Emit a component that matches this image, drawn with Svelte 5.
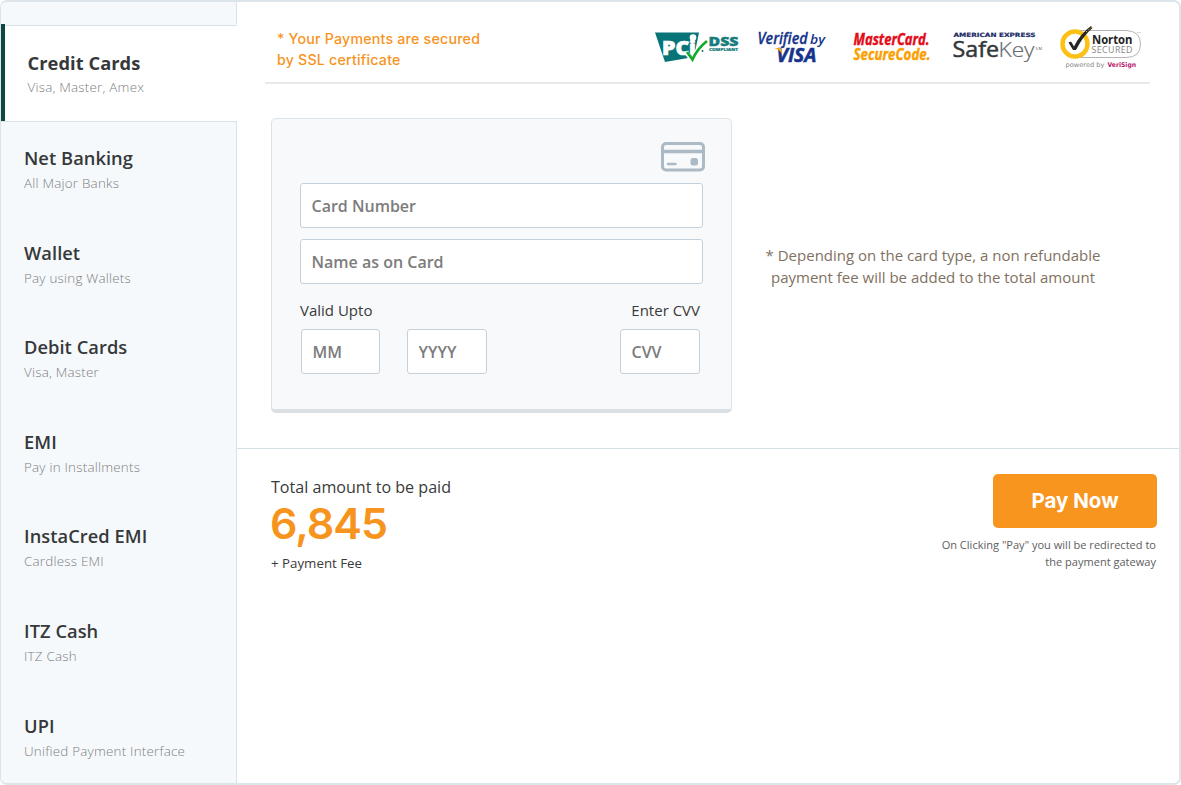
<script>
  const methods = [
    { name: 'Credit Cards', detail: 'Visa, Master, Amex' },
    { name: 'Net Banking', detail: 'All Major Banks' },
    { name: 'Wallet', detail: 'Pay using Wallets' },
    { name: 'Debit Cards', detail: 'Visa, Master' },
    { name: 'EMI', detail: 'Pay in Installments' },
    { name: 'InstaCred EMI', detail: 'Cardless EMI' },
    { name: 'ITZ Cash', detail: 'ITZ Cash' },
    { name: 'UPI', detail: 'Unified Payment Interface' }
  ];
  let active = $state(0);
</script>

<div class="frame">
  <nav class="sidebar">
    <div class="spacer"></div>
    {#each methods as m, i}
      <button class="method" class:active={active === i} onclick={() => (active = i)}>
        <span class="name">{m.name}</span>
        <span class="detail">{m.detail}</span>
      </button>
    {/each}
  </nav>

  <main>
    <header>
      <p class="secured">* Your Payments are secured<br />by SSL certificate</p>
      <div class="logos">
        <svg width="86" height="36" viewBox="654 28 86 36">
          <path d="M655 32.500H699L694 57L665 62Z" fill="#087477" />
          <g font-family="Open Sans, sans-serif" font-weight="800">
            <text x="662" y="55" font-size="19" textLength="34" lengthAdjust="spacingAndGlyphs" fill="#fff" stroke="#fff" stroke-width=".7">PCi</text>
            <circle cx="693" cy="37.500" r="3.300" fill="#fff" />
            <text x="708.500" y="46" font-size="12.500" textLength="30" lengthAdjust="spacingAndGlyphs" fill="#187c7c" stroke="#187c7c" stroke-width=".4">DSS</text>
            <text x="709" y="51" font-size="4" textLength="29" lengthAdjust="spacingAndGlyphs" fill="#187c7c" stroke="#187c7c" stroke-width=".2">COMPLIANT</text>
          </g>
          <path d="M686 52L692 60Q697 49 707 41" fill="none" stroke="#fff" stroke-width="4.500" />
          <path d="M687 52L692.500 59.500Q697 49 707 41" fill="none" stroke="#12ab2e" stroke-width="2.700" />
          <circle cx="702.500" cy="51" r="1" fill="#087477" />
        </svg>
        <svg width="70" height="36" viewBox="757 28 70 36" class="verified">
          <g font-family="Open Sans, sans-serif" font-style="italic" fill="#16338c">
            <text x="757.500" y="44" font-size="15.500" font-weight="600" textLength="50" lengthAdjust="spacingAndGlyphs" stroke="#16338c" stroke-width=".3">Verified</text>
            <text x="810" y="44" font-size="13" font-weight="600" textLength="15" lengthAdjust="spacingAndGlyphs">by</text>
            <text x="776.500" y="61.500" font-size="19" font-weight="700" textLength="40" lengthAdjust="spacingAndGlyphs" stroke="#16338c" stroke-width=".5">VISA</text>
          </g>
          <path d="M774 48H780.500Q782 49 782 54Q779 49 774 48Z" fill="#f8a51b" />
        </svg>
        <svg width="80" height="36" viewBox="852 28 80 36" class="mastercard">
          <g font-family="Open Sans, sans-serif" font-style="italic" font-weight="700" font-size="15.500" stroke-width=".4">
            <text x="853.500" y="45" textLength="76" lengthAdjust="spacingAndGlyphs" fill="#e30b19" stroke="#e30b19">MasterCard.</text>
            <text x="853.500" y="60" textLength="77" lengthAdjust="spacingAndGlyphs" fill="#faa000" stroke="#faa000">SecureCode.</text>
          </g>
        </svg>
        <svg width="92" height="36" viewBox="952 28 92 36" class="safekey">
          <text x="953.500" y="37.400" font-family="DejaVu Sans, sans-serif" font-size="5.800" font-weight="700" textLength="82" lengthAdjust="spacingAndGlyphs" fill="#1b2b66" stroke="#1b2b66" stroke-width=".2">AMERICAN EXPRESS</text>
          <text x="952.500" y="57" font-family="Open Sans, sans-serif" font-size="21" font-weight="500" textLength="46.500" lengthAdjust="spacingAndGlyphs" fill="#34373a" stroke="#34373a" stroke-width=".5">Safe</text>
          <text x="998.500" y="57" font-family="Open Sans, sans-serif" font-size="21" font-weight="300" textLength="36" lengthAdjust="spacingAndGlyphs" fill="#666a6e" stroke="#666a6e" stroke-width=".2">Key</text>
          <text x="1035.500" y="49.500" font-family="Open Sans, sans-serif" font-size="4" textLength="6.500" fill="#555">SM</text>
        </svg>
        <svg width="84" height="48" viewBox="1059 23 84 48" class="norton">
          <path d="M1076 30.500H1126Q1140.500 31 1140.500 44Q1140.500 57.500 1126 57.500H1076" fill="#fff" stroke="#b5b5b5" />
          <circle cx="1075" cy="44" r="12.500" fill="#fff" stroke="#fbc116" stroke-width="4.500" />
          <path d="M1068.500 42.500Q1071 41 1072 43L1074 46.500Q1080 34 1091 26L1092.500 28Q1083 36 1076 50H1073Z" fill="#252525" />
          <path d="M1086 32L1092.500 26.500" stroke="#e9ad20" stroke-width="1" stroke-dasharray="1.500 1.500" />
          <text x="1092" y="43.700" font-family="Open Sans, sans-serif" font-size="13" font-weight="700" textLength="40.500" lengthAdjust="spacingAndGlyphs" fill="#232323">Norton</text>
          <text x="1091.500" y="53.200" font-family="Open Sans, sans-serif" font-size="8.800" textLength="41" lengthAdjust="spacing" fill="#858585">SECURED</text>
          <text x="1137" y="33" font-family="Open Sans, sans-serif" font-size="2.500" fill="#777">TM</text>
          <text x="1065.500" y="67.200" font-family="DejaVu Sans, sans-serif" font-size="6.500" textLength="39" lengthAdjust="spacingAndGlyphs" fill="#858585">powered by</text>
          <text x="1107.500" y="67.200" font-family="DejaVu Sans, sans-serif" font-size="6.500" font-weight="700" textLength="28.500" lengthAdjust="spacingAndGlyphs" fill="#b51b68">VeriSign</text>
        </svg>
      </div>
    </header>

    <section class="entry">
      <form class="card" onsubmit={(e) => e.preventDefault()}>
        <svg class="card-icon" width="44" height="30" viewBox="0 0 44 30">
          <rect x="1.500" y="1.500" width="41" height="26.500" rx="3.500" fill="none" stroke="#acbac5" stroke-width="3" />
          <path d="M2 9.500H42" stroke="#acbac5" stroke-width="3.500" />
          <path d="M7 22H14.500" stroke="#acbac5" stroke-width="2.500" stroke-linecap="round" />
          <rect x="29.500" y="16" width="7.500" height="7.500" rx="2.500" fill="#acbac5" />
        </svg>
        <input class="wide" placeholder="Card Number" aria-label="Card Number" />
        <input class="wide" placeholder="Name as on Card" aria-label="Name as on Card" />
        <div class="labels"><span class="valid">Valid Upto</span><span class="cvv-label">Enter CVV</span></div>
        <div class="small-fields">
          <input placeholder="MM" aria-label="MM" />
          <input class="year" placeholder="YYYY" aria-label="YYYY" />
          <input class="cvv" placeholder="CVV" aria-label="CVV" />
        </div>
      </form>
      <p class="fee-note">* Depending on the card type, a non refundable<br />payment fee will be added to the total amount</p>
    </section>

    <footer>
      <div class="total">
        <div class="total-label">Total amount to be paid</div>
        <div class="amount">6,845</div>
        <div class="fee">+ Payment Fee</div>
      </div>
      <div class="pay">
        <button class="pay-button">Pay Now</button>
        <p>On Clicking "Pay" you will be redirected to<br />the payment gateway</p>
      </div>
    </footer>
  </main>
</div>

<style>
  :global(body) { background: #fff; }
  * { box-sizing: border-box; }
  p { margin: 0; }
  button, input { font: inherit; margin: 0; }
  .frame {
    width: 1181px; height: 785px; display: flex;
    border: 1px solid #dce5ea; border-width: 2px 2px 2px 1px;
    border-radius: 7px; background: #fff; overflow: hidden;
    font-family: "Open Sans", sans-serif; color: #3a3a3a;
  }
  .sidebar {
    width: 236px; flex: none; background: #f5f9fc;
    background-image: linear-gradient(#dae2e7, #dae2e7);
    background-size: 1px 100%; background-position: right; background-repeat: no-repeat;
    display: flex; flex-direction: column;
  }
  .spacer { height: 22px; flex: none; }
  .method {
    height: 94.600px; flex: none; display: flex; flex-direction: column; text-align: left;
    border: 0; background: none; padding: 23px 0 0 23px; color: #363839;
  }
  .method.active {
    height: 98px; border-bottom: 1px solid #dae2e7;
    background: linear-gradient(#f5f9fc 1px, #dae2e7 1px, #dae2e7 2px, #fff 2px);
    box-shadow: inset 4px 0 #0d4941;
    padding: 26px 0 0 26.500px;
  }
  .name { font-size: 18.300px; line-height: 25px; font-weight: 600; letter-spacing: .05px; white-space: nowrap; }
  .active .name { font-weight: 700; font-size: 18.300px; }
  .detail { font-size: 13.400px; line-height: 25px; margin-top: 1px; font-weight: 300; letter-spacing: .22px; color: #808080; }
  .active .detail { margin-top: 0; }
  main { flex: 1; display: flex; flex-direction: column; }
  header {
    height: 82px; flex: none; margin: 0 29px 0 28px; padding: 26px 0 0 12px;
    border-bottom: 2px solid #e7eaed; display: flex; justify-content: space-between;
  }
  .secured { font: 500 14.200px/21px Inter, sans-serif; color: #f7941e; letter-spacing: .22px; white-space: nowrap; }
  .logos { display: flex; align-items: flex-start; margin: 0 7px 0 0; }
  .logos svg { flex: none; display: block; overflow: visible; }
  .logos .verified { margin-left: 17px; }
  .logos .mastercard { margin-left: 25px; }
  .logos .safekey { margin-left: 20px; }
  .logos .norton { margin: -5px 0 0 15px; }
  .entry { height: 365px; flex: none; display: flex; border-bottom: 1px solid #d6e0e5; }
  .card {
    width: 461px; height: 295px; margin: 34px 0 0 34px; padding: 23px 28px 0;
    display: flex; flex-direction: column; background: #f8f9fb;
    border: 1px solid #dce3e8; border-bottom: 4px solid #d9dfe3; border-radius: 5px;
  }
  .card-icon { align-self: flex-end; margin: 0 -1.500px 11px 0; flex: none; }
  input {
    height: 45px; padding: 0 10.500px; border: 1px solid #c5d1da; border-radius: 3px;
    background: #fff; font-size: 16px; font-weight: 600; color: #777; outline: none;
  }
  input::placeholder { color: #7c7c7c; opacity: 1; }
  .wide { width: 403px; flex: none; margin-bottom: 11px; }
  .labels { display: flex; justify-content: space-between; padding: 4px 3px 0 0; font-size: 15px; line-height: 22px; height: 34px; }
  .small-fields { display: flex; padding: 0 3px 0 1px; }
  .small-fields input { width: 79px; }
  .small-fields .year { margin-left: 27px; width: 80px; }
  .small-fields .cvv { margin-left: auto; width: 80px; }
  .fee-note { margin: 160px 0 0 33px; width: 336px; text-align: center; white-space: nowrap; font-size: 15px; line-height: 22px; color: #7f715f; }
  footer { display: flex; justify-content: space-between; padding: 25px 22px 0 34px; }
  .total-label { font-size: 16.100px; line-height: 26px; }
  .amount { font: 600 43px/46px Inter, sans-serif; color: #f7941e; letter-spacing: -1px; margin-left: -1px; padding-bottom: 4px; }
  .fee { font-size: 13.300px; line-height: 27px; }
  .pay { display: flex; flex-direction: column; align-items: flex-end; }
  .pay-button { width: 164px; height: 54px; border: 0; border-radius: 5px; padding: 0 0 1px; background: #f8951f; color: #fff; font: 700 20.500px Inter, sans-serif; }
  .pay p { text-align: right; padding: 8px 1px 0 0; font-size: 11.050px; line-height: 17px; color: #606060; }
</style>
